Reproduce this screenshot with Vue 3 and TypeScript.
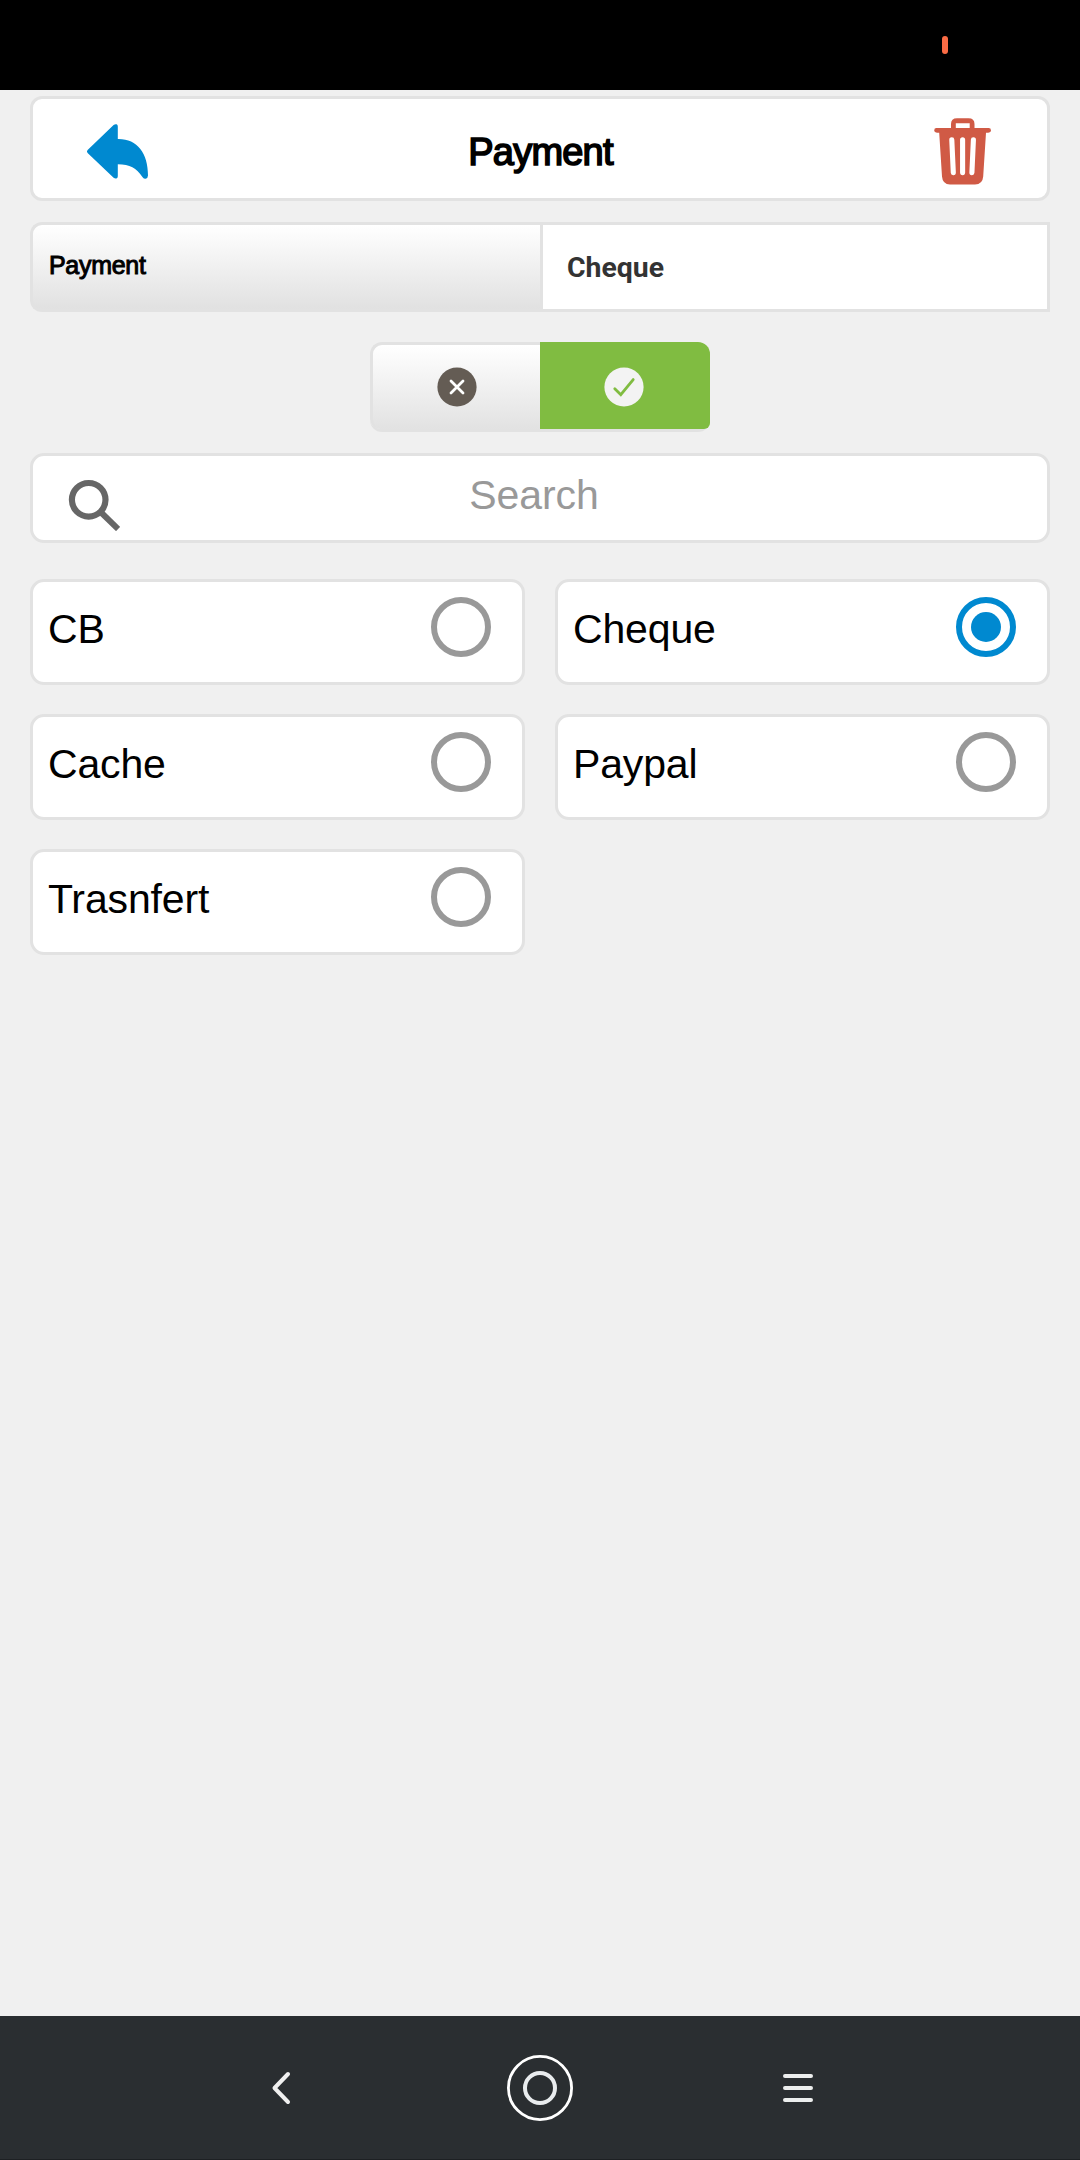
<script setup lang="ts">
import { ref } from 'vue'

interface PaymentMethod {
  id: number
  label: string
}

const methods: PaymentMethod[] = [
  { id: 1, label: 'CB' },
  { id: 2, label: 'Cheque' },
  { id: 3, label: 'Cache' },
  { id: 4, label: 'Paypal' },
  { id: 5, label: 'Trasnfert' },
]

const selected = ref<number>(2)
const query = ref<string>('')
</script>

<template>
  <div class="screen">
    <div class="status"><span class="battery"></span></div>

    <main class="content">
      <header class="header">
        <button class="icon-btn back" aria-label="Back">
          <svg width="66" height="60" viewBox="85 122 66 60">
            <path
              fill="#0089d0"
              d="M87.6 149.9 L113.6 125 Q115.2 123.8 116.6 124.3 Q117.8 124.8 117.8 126.5 V139 C137 138.6 148.2 153 148 175.6 Q147.9 178.4 145.6 178.7 Q143.8 178.8 142.6 177.2 C136.3 168 130 164.6 117.8 164.3 V176.2 Q117.8 178 116.4 178.5 Q115 178.9 113.6 177.8 L87.6 153.1 Q86.2 151.5 87.6 149.9 Z"
            />
          </svg>
        </button>
        <h1 class="title">Payment</h1>
        <button class="icon-btn trash" aria-label="Delete">
          <svg width="58" height="68" viewBox="934 117 58 68">
            <path
              fill="#d05a45"
              fill-rule="evenodd"
              d="M936.4 128 H951 V124 Q951 118.2 957 118.2 H968.5 Q974.5 118.2 974.5 124 V128 H988.6 Q991 128 991 130.4 Q991 132.8 986 132.8 L983.2 176.5 Q982.6 184.4 975 184.4 H950 Q942.6 184.4 942 176.5 L939.2 132.8 Q934.2 132.8 934.2 130.4 Q934.2 128 936.4 128 Z M955.8 123.2 V128 H969.7 V123.2 Z"
            />
            <path
              d="M951.8 139.8 L953.3 172.6 M962.6 139.8 V172.6 M973.4 139.8 L971.9 172.6"
              stroke="#fff"
              stroke-width="5.1"
              stroke-linecap="round"
            />
          </svg>
        </button>
      </header>

      <section class="field">
        <div class="field-label">Payment</div>
        <div class="field-value">Cheque</div>
      </section>

      <div class="toggle">
        <button class="toggle-off" aria-label="Cancel">
          <svg width="40" height="40" viewBox="0 0 40 40">
            <circle cx="20" cy="20" r="19.6" fill="#645c54" />
            <path d="M14 14 L26 26 M26 14 L14 26" stroke="#fff" stroke-width="2.8" stroke-linecap="round" />
          </svg>
        </button>
        <button class="toggle-on" aria-label="Confirm">
          <svg width="40" height="40" viewBox="0 0 40 40">
            <circle cx="20" cy="20" r="19.6" fill="#f3f3f3" />
            <path
              d="M10.8 21.7 L16.8 27.7 L29.2 12.6"
              fill="none"
              stroke="#80bc41"
              stroke-width="2.8"
              stroke-linecap="round"
            />
          </svg>
        </button>
      </div>

      <label class="search">
        <svg class="search-icon" width="52" height="52" viewBox="68 479 52 52">
          <circle cx="88.7" cy="499.8" r="16.8" fill="none" stroke="#666" stroke-width="6.2" />
          <path d="M100.6 512 L118.1 529" stroke="#666" stroke-width="6" />
        </svg>
        <input v-model="query" class="search-input" type="text" placeholder="Search" />
      </label>

      <section class="methods">
        <button v-for="m in methods" :key="m.id" class="method" @click="selected = m.id">
          <span class="method-label">{{ m.label }}</span>
          <span class="radio" :class="{ checked: m.id === selected }"></span>
        </button>
      </section>
    </main>

    <nav class="navbar">
      <svg width="20" height="34" viewBox="0 0 20 34">
        <path
          d="M17 3 L3.5 17 L17 31"
          fill="none"
          stroke="#f0f0f0"
          stroke-width="4"
          stroke-linecap="round"
          stroke-linejoin="round"
        />
      </svg>
      <svg class="nav-home" width="68" height="68" viewBox="0 0 68 68">
        <circle cx="34" cy="34" r="31.6" fill="none" stroke="#fff" stroke-width="2.8" />
        <circle cx="34" cy="34" r="15" fill="none" stroke="#e9ecee" stroke-width="4" />
      </svg>
      <svg width="30" height="28" viewBox="0 0 30 28">
        <path d="M2 2 H28 M2 14 H28 M2 26 H28" stroke="#eceeee" stroke-width="4" stroke-linecap="round" />
      </svg>
    </nav>
  </div>
</template>

<style>
body {
  margin: 0;
  background: #f0f0f0;
}
</style>

<style scoped>
.screen {
  width: 1080px;
  height: 2160px;
  display: flex;
  flex-direction: column;
  background: #f0f0f0;
  font-family: 'Liberation Sans', Arial, sans-serif;
  color: #000;
}
.screen * {
  box-sizing: border-box;
}
button {
  appearance: none;
  margin: 0;
  padding: 0;
  border: 0;
  background: none;
  font: inherit;
  color: inherit;
}
svg {
  display: block;
}
.status {
  height: 90px;
  flex: none;
  background: #000;
  display: flex;
  justify-content: flex-end;
  padding: 36px 132px 0 0;
  box-sizing: border-box;
}
.battery {
  width: 6px;
  height: 18px;
  border-radius: 3px;
  background: #fb6c45;
}
.content {
  flex: 1;
  padding: 6px 30px 0;
  display: flex;
  flex-direction: column;
}
.header {
  height: 105px;
  border: 3px solid #e2e2e2;
  border-radius: 12px;
  background: #fff;
  display: flex;
  align-items: flex-start;
  justify-content: space-between;
  padding: 0 55px 0 52px;
}
.back {
  margin-top: 23px;
}
.trash {
  margin-top: 18px;
}
.title {
  margin: 0;
  padding: 6px 4px 0 0;
  font-size: 38px;
  line-height: 94px;
  font-weight: 400;
  letter-spacing: -0.8px;
  -webkit-text-stroke: 1.6px #000;
}
.field {
  margin-top: 21px;
  height: 90px;
  display: flex;
}
.field-label {
  width: 510px;
  border: 3px solid #e2e2e2;
  border-right: 0;
  border-radius: 12px 0 0 12px;
  background: linear-gradient(#fff, #e1e1e1);
  padding-left: 16px;
  font-size: 25px;
  line-height: 80px;
  letter-spacing: -0.3px;
  -webkit-text-stroke: 1px #000;
}
.field-value {
  flex: 1;
  border: 3px solid #e2e2e2;
  background: #fff;
  padding-left: 24px;
  font-family: Roboto, sans-serif;
  font-weight: 700;
  font-size: 28.4px;
  line-height: 85px;
  color: #333;
}
.toggle {
  margin: 30px auto 0;
  width: 340px;
  height: 90px;
  display: flex;
  border-radius: 12px;
  border-bottom: 3px solid #e2e2e2;
}
.toggle-off,
.toggle-on {
  width: 170px;
  height: 87px;
  display: flex;
  align-items: center;
  justify-content: center;
}
.toggle-off {
  border: 3px solid #e2e2e2;
  border-width: 3px 0 0 3px;
  border-radius: 12px 0 0 10px;
  background: linear-gradient(#fff, #e2e2e2);
}
.toggle-on {
  border-radius: 0 12px 6px 0;
  background: #80bc41;
}
.toggle-on svg {
  margin: 3px 2px 0 0;
}
.search {
  margin-top: 21px;
  height: 90px;
  border: 3px solid #e2e2e2;
  border-radius: 14px;
  background: #fff;
  display: flex;
  align-items: flex-start;
}
.search-icon {
  flex: none;
  margin: 23px 0 0 35px;
}
.search-input {
  flex: 1;
  min-width: 0;
  height: 78px;
  border: 0;
  outline: 0;
  background: none;
  padding: 0 99px 0 0;
  text-align: center;
  font-family: inherit;
  font-size: 41px;
  letter-spacing: -0.1px;
  color: #000;
}
.search-input::placeholder {
  color: #999;
  opacity: 1;
}
.methods {
  margin-top: 36px;
  display: grid;
  grid-template-columns: 495px 495px;
  gap: 29px 30px;
}
.method {
  height: 106px;
  border: 3px solid #e2e2e2;
  border-radius: 14px;
  background: #fff;
  display: flex;
  align-items: flex-start;
  justify-content: space-between;
  padding: 0 31px 0 15px;
}
.method-label {
  font-size: 41px;
  line-height: 94px;
  letter-spacing: -0.15px;
}
.radio {
  width: 60px;
  height: 60px;
  margin-top: 15px;
  border: 6px solid #999;
  border-radius: 50%;
  display: flex;
  align-items: center;
  justify-content: center;
}
.radio.checked {
  border-color: #0089d0;
}
.radio.checked::before {
  content: '';
  width: 30px;
  height: 30px;
  border-radius: 50%;
  background: #0089d0;
}
.navbar {
  height: 144px;
  flex: none;
  background: #2a2e31;
  border-bottom: 1px solid #1d2023;
  display: flex;
  align-items: center;
  justify-content: space-between;
  padding: 1px 267px 0 271px;
  box-sizing: border-box;
}
.nav-home {
  margin-left: 6px;
}
</style>
